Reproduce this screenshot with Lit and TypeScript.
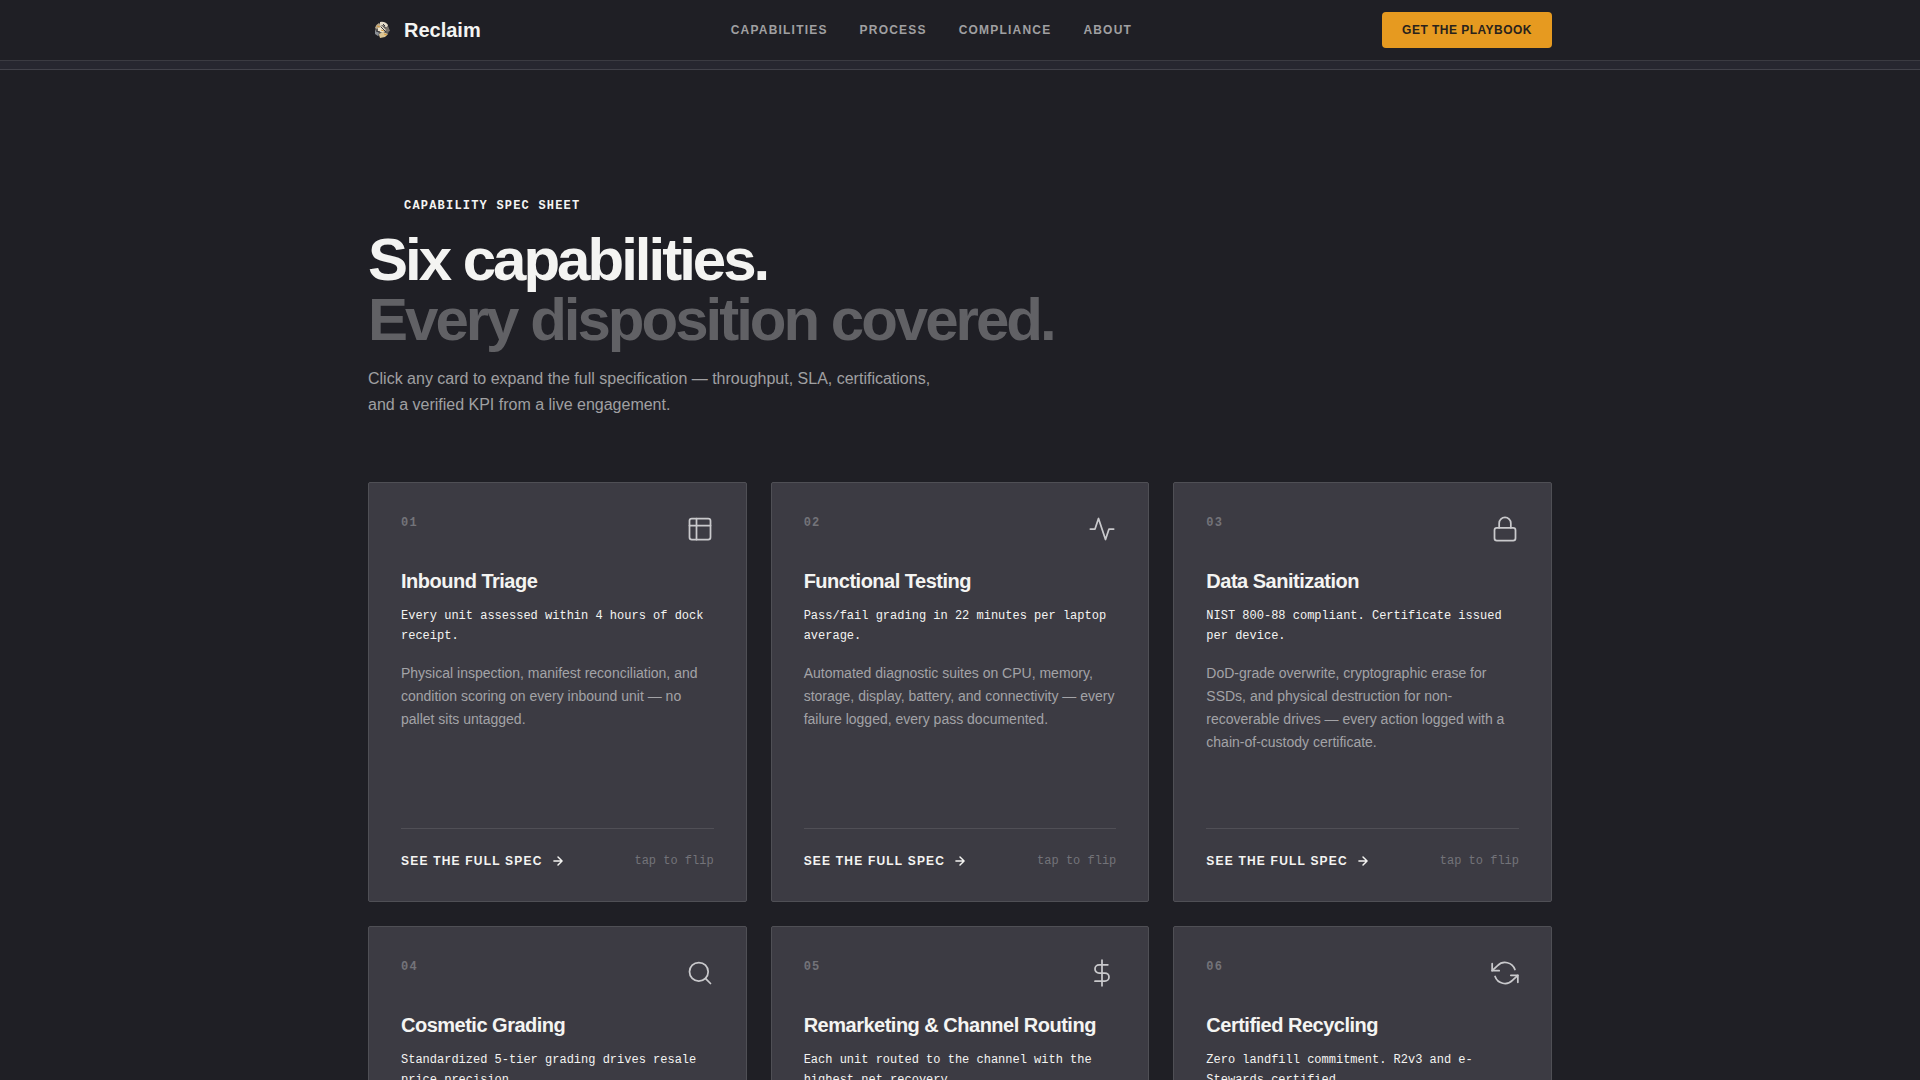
import { LitElement, html, css, svg } from "lit";
import { customElement, property } from "lit/decorators.js";

interface Capability {
  id: string;
  icon: string;
  title: string;
  tagline: string;
  text: string;
}

const CAPABILITIES: Capability[] = [
  {
    id: "01",
    icon: "layout",
    title: "Inbound Triage",
    tagline: "Every unit assessed within 4 hours of dock receipt.",
    text: "Physical inspection, manifest reconciliation, and condition scoring on every inbound unit — no pallet sits untagged.",
  },
  {
    id: "02",
    icon: "pulse",
    title: "Functional Testing",
    tagline: "Pass/fail grading in 22 minutes per laptop average.",
    text: "Automated diagnostic suites on CPU, memory, storage, display, battery, and connectivity — every failure logged, every pass documented.",
  },
  {
    id: "03",
    icon: "lock",
    title: "Data Sanitization",
    tagline: "NIST 800-88 compliant. Certificate issued per device.",
    text: "DoD-grade overwrite, cryptographic erase for SSDs, and physical destruction for non-recoverable drives — every action logged with a chain-of-custody certificate.",
  },
  {
    id: "04",
    icon: "search",
    title: "Cosmetic Grading",
    tagline: "Standardized 5-tier grading drives resale price precision.",
    text: "",
  },
  {
    id: "05",
    icon: "dollar",
    title: "Remarketing & Channel Routing",
    tagline: "Each unit routed to the channel with the highest net recovery.",
    text: "",
  },
  {
    id: "06",
    icon: "refresh",
    title: "Certified Recycling",
    tagline: "Zero landfill commitment. R2v3 and e-Stewards certified.",
    text: "",
  },
];

const ICONS: Record<string, unknown> = {
  layout: svg`<rect x="3" y="3" width="18" height="18" rx="2"/><path d="M3 9h18M9 21V3"/>`,
  pulse: svg`<path d="M22 12h-4l-3 9L9 3l-3 9H2"/>`,
  lock: svg`<rect x="3" y="11" width="18" height="11" rx="2"/><path d="M7 11V7a5 5 0 0 1 10 0v4"/>`,
  search: svg`<circle cx="11" cy="11" r="8"/><path d="M21 21l-4.35-4.35"/>`,
  dollar: svg`<path d="M12 1v22M17 5H9.500a3.500 3.500 0 0 0 0 7h5a3.500 3.500 0 0 1 0 7H6"/>`,
  refresh: svg`<path d="M1 4v6h6M23 20v-6h-6"/><path d="M20.490 9A9 9 0 0 0 5.640 5.640L1 10m22 4-4.640 4.360A9 9 0 0 1 3.510 15"/>`,
};

@customElement("capability-card")
class CapabilityCard extends LitElement {
  @property({ attribute: false }) item!: Capability;

  static styles = css`
    :host {
      display: flex;
    }
    .card {
      flex: 1;
      display: flex;
      flex-direction: column;
      box-sizing: border-box;
      min-height: 420px;
      padding: 32px;
      background: #3c3b43;
      border: 1px solid #4f4f55;
      border-radius: 2px;
      cursor: pointer;
    }
    .top {
      display: flex;
      justify-content: space-between;
      align-items: flex-start;
      margin-bottom: 24px;
    }
    .number {
      font: 700 12px/16px "Liberation Mono", monospace;
      letter-spacing: 0.1em;
      color: #737379;
    }
    .icon {
      display: block;
      width: 28px;
      height: 28px;
      color: #c9c9cc;
    }
    .title {
      margin: 0 0 11px;
      font-size: 20px;
      line-height: 28px;
      font-weight: 700;
      letter-spacing: -0.025em;
      color: #f4f4f2;
    }
    .tagline {
      margin: 0 0 16px;
      font: 400 12px/20px "Liberation Mono", monospace;
      color: #f4f4f2;
    }
    .text {
      margin: 0;
      font-size: 14px;
      line-height: 23px;
      color: #a3a3a7;
    }
    .foot {
      display: flex;
      justify-content: space-between;
      align-items: center;
      margin-top: auto;
      padding-top: 24px;
      border-top: 1px solid #504f56;
    }
    .more {
      display: flex;
      align-items: center;
      gap: 8px;
      padding: 0;
      border: 0;
      background: none;
      font: 700 12px/16px "Liberation Sans", Arial, sans-serif;
      letter-spacing: 0.1em;
      text-transform: uppercase;
      color: #f4f4f2;
      cursor: pointer;
    }
    .arrow {
      width: 14px;
      height: 14px;
    }
    .hint {
      font: 400 12px/16px "Liberation Mono", monospace;
      color: #737379;
    }
  `;

  render() {
    const { id, icon, title, tagline, text } = this.item;
    return html`
      <article class="card">
        <div class="top">
          <span class="number">${id}</span>
          <svg class="icon" viewBox="0 0 24 24" fill="none" stroke="currentColor" stroke-width="1.5"
            stroke-linecap="round" stroke-linejoin="round" aria-hidden="true">${ICONS[icon]}</svg>
        </div>
        <h2 class="title">${title}</h2>
        <p class="tagline">${tagline}</p>
        ${text ? html`<p class="text">${text}</p>` : ""}
        <div class="foot">
          <button class="more" type="button">
            See the full spec
            <svg class="arrow" viewBox="0 0 24 24" fill="none" stroke="currentColor" stroke-width="2.5"
              stroke-linecap="round" stroke-linejoin="round" aria-hidden="true">
              <path d="M5 12h14M12 5l7 7-7 7"/>
            </svg>
          </button>
          <span class="hint">tap to flip</span>
        </div>
      </article>
    `;
  }
}

@customElement("app-root")
class AppRoot extends LitElement {
  static styles = css`
    :host {
      display: block;
      min-height: 100vh;
      background: #1f1f25;
      color: #f4f4f2;
      font-family: "Liberation Sans", Arial, sans-serif;
    }
    .wrap {
      box-sizing: border-box;
      max-width: 1280px;
      margin: 0 auto;
      padding: 0 48px;
    }
    .header {
      border-bottom: 1px solid #3b3b42;
    }
    .bar {
      display: flex;
      justify-content: space-between;
      align-items: center;
      height: 60px;
    }
    .brand {
      display: flex;
      align-items: center;
      gap: 8px;
      color: #f4f4f2;
      font-size: 20px;
      line-height: 28px;
      font-weight: 700;
      text-decoration: none;
    }
    .logo {
      width: 28px;
      height: 28px;
    }
    .nav {
      display: flex;
      gap: 32px;
    }
    .link {
      color: #a0a0a2;
      font-size: 12px;
      line-height: 16px;
      font-weight: 700;
      letter-spacing: 0.1em;
      text-transform: uppercase;
      text-decoration: none;
    }
    .cta {
      padding: 10px 20px;
      border: 0;
      border-radius: 4px;
      background: #e69a20;
      color: #29221c;
      font: 700 12px/16px "Liberation Sans", Arial, sans-serif;
      letter-spacing: 0.04em;
      text-transform: uppercase;
      cursor: pointer;
    }
    .strip {
      height: 8px;
      background: #272730;
      border-bottom: 1px solid #42424a;
    }
    .main {
      padding-top: 128px;
      padding-bottom: 128px;
    }
    .eyebrow {
      margin: 0 0 16px;
      padding-left: 36px;
      font: 700 12px/16px "Liberation Mono", monospace;
      letter-spacing: 0.1em;
      text-transform: uppercase;
    }
    .heading {
      margin: 0 0 16px;
      font-size: 60px;
      line-height: 60px;
      font-weight: 700;
      letter-spacing: -0.05em;
    }
    .dim {
      display: block;
      color: #616165;
    }
    .lead {
      max-width: 576px;
      margin: 0 0 64px;
      font-size: 16px;
      line-height: 26px;
      color: #a0a0a2;
    }
    .grid {
      display: grid;
      grid-template-columns: repeat(3, minmax(0, 1fr));
      gap: 24px;
    }
    @media (max-width: 960px) {
      .grid {
        grid-template-columns: minmax(0, 1fr);
      }
    }
  `;

  render() {
    return html`
      <header class="header">
        <div class="wrap bar">
          <a class="brand" href="#">
            <svg class="logo" viewBox="0 0 28 28" fill="none" aria-hidden="true">
              <circle cx="14" cy="14" r="7" fill="#5d5b5a"/>
              <path d="M7 12a7 7 0 0 1 4-5l2 3-4 3z" fill="#b9a88a"/>
              <path d="M12 6a8 8 0 0 1 8 3l-1 3-4-3-3 1z" fill="#e4dcca"/>
              <path d="M20 10l2 5-3 1-2-4z" fill="#77716a"/>
              <path d="M10 12l4-2 4 4-3 3-5-2z" fill="#eee4cc"/>
              <path d="M7 14l4 3-1 3-3-2z" fill="#8a8f95"/>
              <path d="M11 18l4-2 5 2-3 3-5 1z" fill="#dcc594"/>
              <path d="M9 10l3 1M13 14l3 1M16 18l3 1" stroke="#d79a3d"/>
              <path d="M13 11l5 5M8 15l4 1M15 8l2 2" stroke="#37363a"/>
            </svg>
            Reclaim
          </a>
          <nav class="nav">
            <a class="link" href="#">Capabilities</a>
            <a class="link" href="#">Process</a>
            <a class="link" href="#">Compliance</a>
            <a class="link" href="#">About</a>
          </nav>
          <button class="cta" type="button">Get the playbook</button>
        </div>
      </header>
      <div class="strip"></div>
      <main class="wrap main">
        <p class="eyebrow">Capability spec sheet</p>
        <h1 class="heading">Six capabilities. <span class="dim">Every disposition covered.</span></h1>
        <p class="lead">
          Click any card to expand the full specification — throughput, SLA, certifications, and a
          verified KPI from a live engagement.
        </p>
        <section class="grid">
          ${CAPABILITIES.map((item) => html`<capability-card .item=${item}></capability-card>`)}
        </section>
      </main>
    `;
  }
}
